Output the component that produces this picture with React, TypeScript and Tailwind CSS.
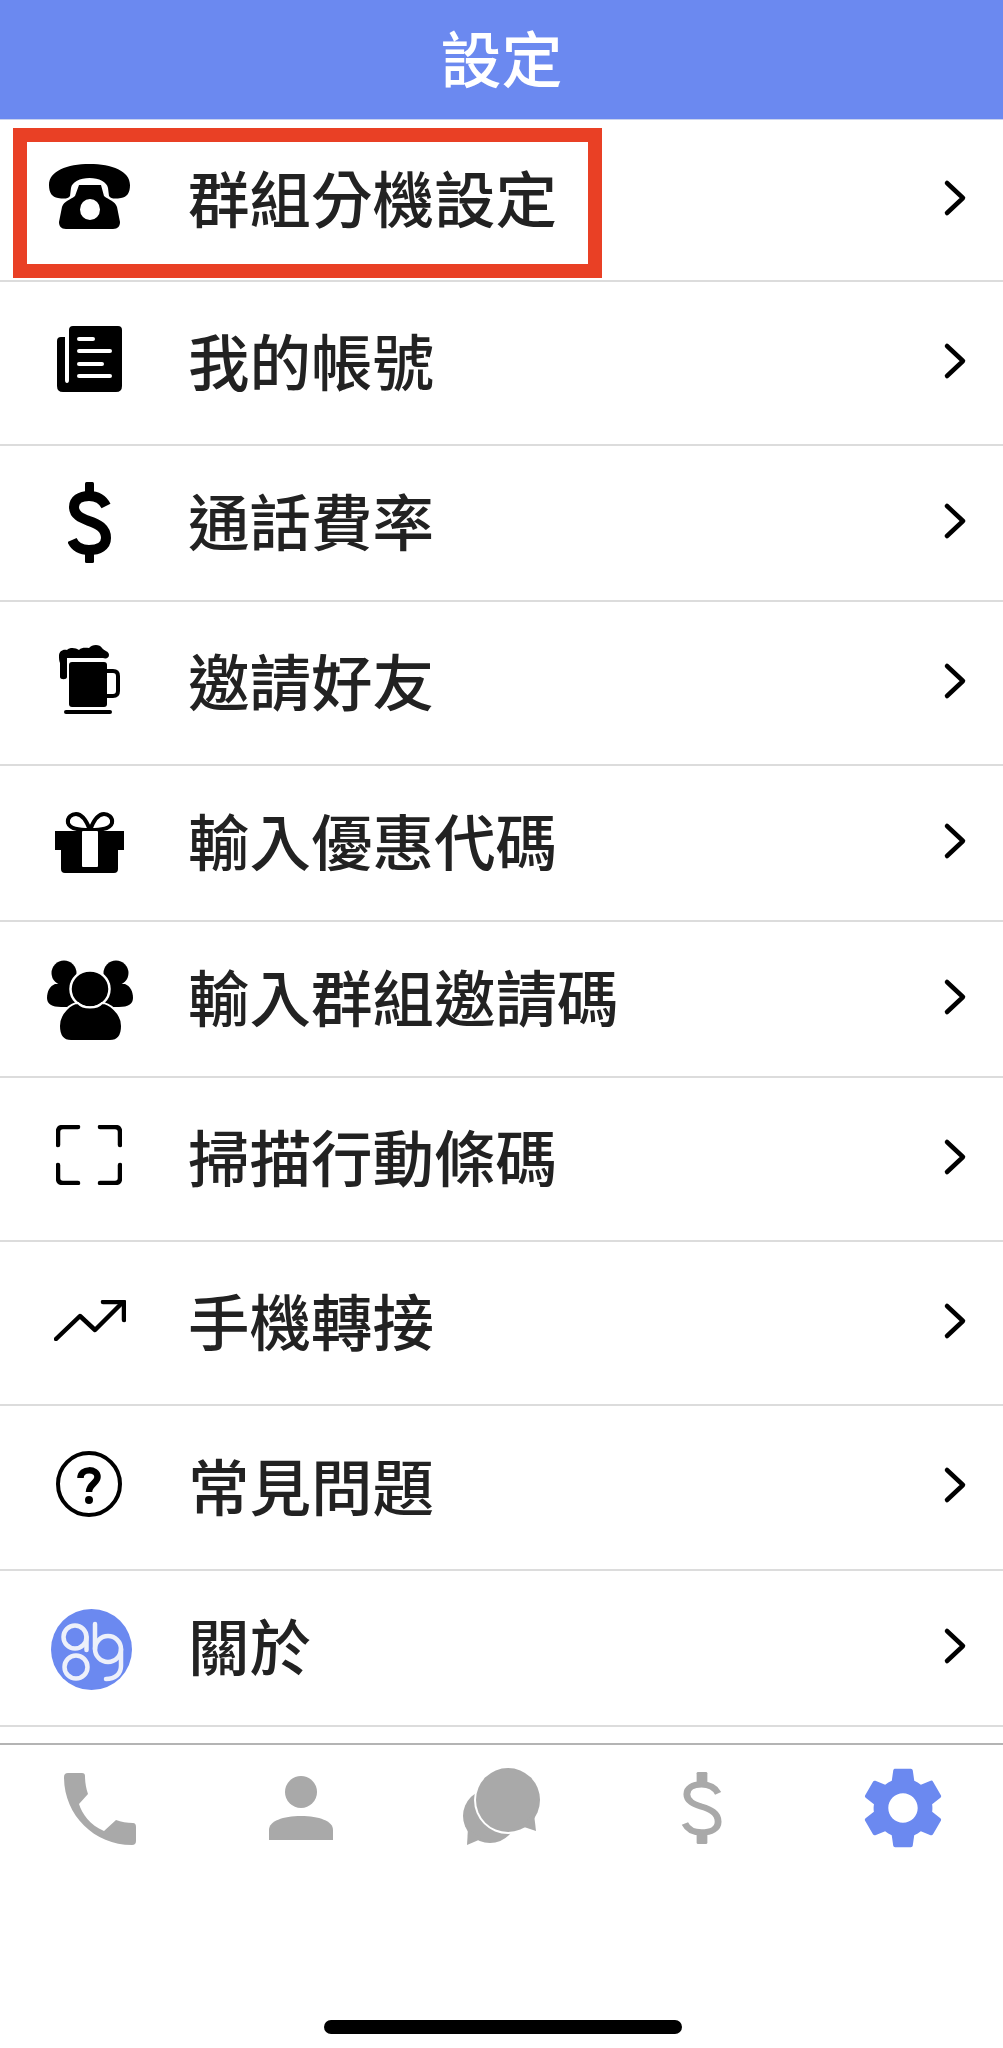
import React from 'react';
import { MdSettings } from 'react-icons/md';

const BLUE = '#6B89F0';
const GREY = '#A9A9A9';

const PhoneIcon = () => (
  <svg width="81" height="65" viewBox="0 0 81 65">
    <path d="M0 21C0 7 18 0 40.500 0C63 0 81 7 81 21C81 29 78 33 72 34C66 35 62 35 60 32L59 24C58 18 50 14 40.500 14C31 14 23 18 22 24L21 32C19 35 15 35 9 34C3 33 0 29 0 21Z" fill="#000" />
    <path fillRule="evenodd" d="M30 21H52L55 32C60 36 66 37 68 43L71 58C71 62 69 65 64 65H17C12 65 10 62 10 58L13 43C15 37 21 36 26 32ZM41 35A10 10.500 0 1 0 41 56A10 10.500 0 1 0 41 35Z" fill="#000" />
  </svg>
);

const NewsIcon = () => (
  <svg width="65" height="66" viewBox="0 0 65 66">
    <path d="M12 4Q12 0 16 0H61Q65 0 65 4V60Q65 66 59 66H6Q0 66 0 60V15Q0 11 4 11H8V54Q8 57 10 57Q12 57 12 54Z" fill="#000" />
    <rect x="20" y="11" width="18" height="4" rx="2" fill="#fff" />
    <rect x="20" y="23" width="35" height="4" rx="2" fill="#fff" />
    <rect x="20" y="36" width="27" height="4" rx="2" fill="#fff" />
    <rect x="20" y="48" width="35" height="4" rx="2" fill="#fff" />
  </svg>
);

const DollarIcon = ({ w, h, sw, stem, color }: { w: number; h: number; sw: number; stem: number; color: string }) => (
  <svg width={w} height={h} viewBox="0 0 43 81" preserveAspectRatio="none">
    <path d="M38 24C34 16 28 14 21 14C12 14 6 18 6 25C6 33 13 36 21 39C30 42 38 46 38 56C38 64 31 68 21 68C13 68 7 65 4 58" fill="none" stroke={color} strokeWidth={sw} />
    <rect x={21.500 - stem / 2} y="0" width={stem} height="14" rx="1.500" fill={color} />
    <rect x={21.500 - stem / 2} y="67" width={stem} height="14" rx="1.500" fill={color} />
  </svg>
);

const BeerIcon = () => (
  <svg width="61" height="71" viewBox="0 0 61 71">
    <path d="M0 12C0 7 4 5 8 6C11 3 17 4 20 6C23 3 27 4 30 4C33 0 41 0 43 4C45 7 50 7 50 11C50 14 47 15 44 14H8V33C8 36 1 36 1 33V19C0 17 0 14 0 12Z" fill="#000" />
    <path d="M13 18H45Q48 18 48 21V60Q48 63 45 63H13Q10 63 10 60V21Q10 18 13 18Z" fill="#000" />
    <path d="M48 27H54Q59 27 59 32V47Q59 52 54 52H48" fill="none" stroke="#000" strokeWidth="4" />
    <rect x="5" y="66" width="48" height="4" rx="2" fill="#000" />
  </svg>
);

const GiftIcon = () => (
  <svg width="69" height="61" viewBox="0 0 69 61">
    <path d="M35 18C28 18 15 18 13 11C12 5 17 2 21 2C27 2 32 10 35 18C38 10 43 2 49 2C53 2 58 5 57 11C55 18 42 18 35 18Z" fill="none" stroke="#000" strokeWidth="4" />
    <path d="M0 19H69V38H63V57Q63 61 59 61H10Q6 61 6 57V38H0Z" fill="#000" />
    <rect x="27" y="19" width="16" height="36" rx="1" fill="#fff" />
  </svg>
);

const GroupIcon = () => (
  <svg width="86" height="81" viewBox="0 0 86 81">
    <circle cx="17" cy="13" r="12.500" fill="#000" />
    <circle cx="69" cy="13" r="12.500" fill="#000" />
    <path d="M8 24C3 26 0 31 0 38C0 44 5 47 14 47H30V24Z" fill="#000" />
    <path d="M78 24C83 26 86 31 86 38C86 44 81 47 72 47H56V24Z" fill="#000" />
    <ellipse cx="43" cy="29" rx="19.500" ry="18.500" fill="#000" stroke="#fff" strokeWidth="2.500" />
    <path d="M12 66C12 52 25 43 31 43C36 49 50 49 55 43C61 43 75 52 75 66C75 75 71 81 63 81H24C16 81 12 75 12 66Z" fill="#000" stroke="#fff" strokeWidth="2" />
  </svg>
);

const ScanIcon = () => (
  <svg width="66" height="60" viewBox="0 0 66 60" fill="none" stroke="#000" strokeWidth="4.500" strokeLinecap="round">
    <path d="M2 20V7Q2 2 7 2H22" />
    <path d="M44 2H59Q64 2 64 7V20" />
    <path d="M2 40V53Q2 58 7 58H22" />
    <path d="M44 58H59Q64 58 64 53V40" />
  </svg>
);

const TrendIcon = () => (
  <svg width="72" height="41" viewBox="0 0 72 41" fill="none" stroke="#000" strokeWidth="4.500" strokeLinecap="round" strokeLinejoin="round">
    <path d="M2 39L26 16L41 30L68 3" />
    <path d="M49 2H70V20" />
  </svg>
);

const HelpIcon = () => (
  <svg width="66" height="66" viewBox="0 0 66 66">
    <circle cx="33" cy="33" r="31" fill="none" stroke="#000" strokeWidth="4" />
    <path d="M24.500 27C24.500 17 41.500 17 41.500 26C41.500 32 33 33 33 41" fill="none" stroke="#000" strokeWidth="6.500" />
    <circle cx="33" cy="49" r="4" fill="#000" />
  </svg>
);

const LogoIcon = () => (
  <svg width="81" height="81" viewBox="0 0 81 81">
    <circle cx="40.500" cy="40.500" r="40.500" fill={BLUE} />
    <g fill="none" stroke="#EDF0FA" strokeWidth="4.500" strokeLinecap="round">
      <circle cx="24" cy="28" r="11.500" />
      <path d="M35.500 28V41" />
      <path d="M44 15V40" />
      <circle cx="57" cy="40" r="13" />
      <circle cx="25" cy="58" r="11.500" />
      <path d="M70 40V57C70 65 64 70 55 70" />
    </g>
  </svg>
);

const ChatIcon = () => (
  <svg width="78" height="77" viewBox="0 0 78 77">
    <circle cx="27" cy="48" r="27" fill={GREY} />
    <path d="M5 60L4 77L18 71Z" fill={GREY} />
    <circle cx="45" cy="32" r="34" fill="#fff" />
    <circle cx="45" cy="32" r="32" fill={GREY} />
    <path d="M71 46L73 63L58 58Z" fill={GREY} />
  </svg>
);

const CallIcon = () => (
  <svg width="73" height="72" viewBox="0 0 73 72">
    <path d="M0 4Q0 0 4 0H18Q21 0 21 3C21 9 22 15 24 21L15 31C18 41 26 52 40 58L52 47C57 49 63 50 69 50Q72 50 72 54V68Q72 72 68 72C30 72 0 42 0 4Z" fill={GREY} />
  </svg>
);

const PersonIcon = () => (
  <svg width="64" height="64" viewBox="0 0 64 64">
    <circle cx="32" cy="16" r="16" fill={GREY} />
    <path d="M0 64V54C0 45 14 40 32 40C50 40 64 45 64 54V64Z" fill={GREY} />
  </svg>
);

const Chevron = () => (
  <svg width="24" height="38" viewBox="0 0 24 38" fill="none" stroke="#000" strokeWidth="4.500" strokeLinecap="round" strokeLinejoin="round">
    <path d="M4 4L20 19L4 34" />
  </svg>
);

const rows: { label: string; height: string; iconBox: string; icon: React.ReactNode }[] = [
  { label: '群組分機設定', height: 'h-[162px]', iconBox: 'pb-[8px]', icon: <PhoneIcon /> },
  { label: '我的帳號', height: 'h-[164px]', iconBox: 'pb-[8px]', icon: <NewsIcon /> },
  { label: '通話費率', height: 'h-[156px]', iconBox: 'pb-[2px]', icon: <DollarIcon w={43} h={81} sw={10} stem={9} color="#000" /> },
  { label: '邀請好友', height: 'h-[164px]', iconBox: 'pb-[8px]', icon: <BeerIcon /> },
  { label: '輸入優惠代碼', height: 'h-[156px]', iconBox: 'pb-[2px]', icon: <GiftIcon /> },
  { label: '輸入群組邀請碼', height: 'h-[156px]', iconBox: 'pt-[3px] pl-[1px]', icon: <GroupIcon /> },
  { label: '掃描行動條碼', height: 'h-[164px]', iconBox: 'pb-[8px]', icon: <ScanIcon /> },
  { label: '手機轉接', height: 'h-[164px]', iconBox: 'pb-[6px] pl-[2px]', icon: <TrendIcon /> },
  { label: '常見問題', height: 'h-[165px]', iconBox: 'pb-[8px]', icon: <HelpIcon /> },
  { label: '關於', height: 'h-[156px]', iconBox: 'pt-[3px] pl-[4px]', icon: <LogoIcon /> },
];

const App: React.FC = () => {
  return (
    <div
      className="relative flex flex-col w-[1003px] h-[2048px] overflow-hidden bg-white"
      style={{ fontFamily: '"Noto Sans CJK TC", "Noto Sans", sans-serif' }}
    >
      {/* Header */}
      <header className="flex-none h-[120px] pb-[6px] flex items-center justify-center bg-[#6B89F0] border-b border-[#c9d2ee]">
        <span className="text-[61px] leading-none font-medium text-white">設定</span>
      </header>

      {/* Menu list */}
      <main className="flex-none">
        {rows.map((row) => (
          <div key={row.label} className={`${row.height} flex items-center border-b-2 border-[#dcdcdc]`}>
            <div className={`${row.iconBox} w-[178px] flex-none flex items-center justify-center`}>{row.icon}</div>
            <span className="ml-[10px] pb-[6px] flex-1 text-[61.5px] leading-none font-medium text-[#222222]">{row.label}</span>
            <div className="mr-[36px] flex-none pb-[5px]">
              <Chevron />
            </div>
          </div>
        ))}
      </main>

      {/* Tab bar */}
      <nav className="flex-none mt-[16px] h-[128px] grid grid-cols-5 items-center justify-items-center border-t-2 border-[#b4b4b4]">
        <div className="pt-[2px] pl-[1px]">
          <CallIcon />
        </div>
        <PersonIcon />
        <div className="pb-[3px] pl-[2px]">
          <ChatIcon />
        </div>
        <DollarIcon w={42} h={72} sw={7} stem={11} color={GREY} />
        <div className="pl-[1px]">
          <MdSettings size={98} color={BLUE} />
        </div>
      </nav>

      {/* Home indicator */}
      <div className="mt-[149px] ml-[324px] w-[358px] h-[14px] rounded-full bg-black" />

      {/* Red highlight */}
      <div className="absolute left-[13px] top-[128px] w-[589px] h-[150px] border-[14px] border-[#E94025]" />
    </div>
  );
};

export default App;
